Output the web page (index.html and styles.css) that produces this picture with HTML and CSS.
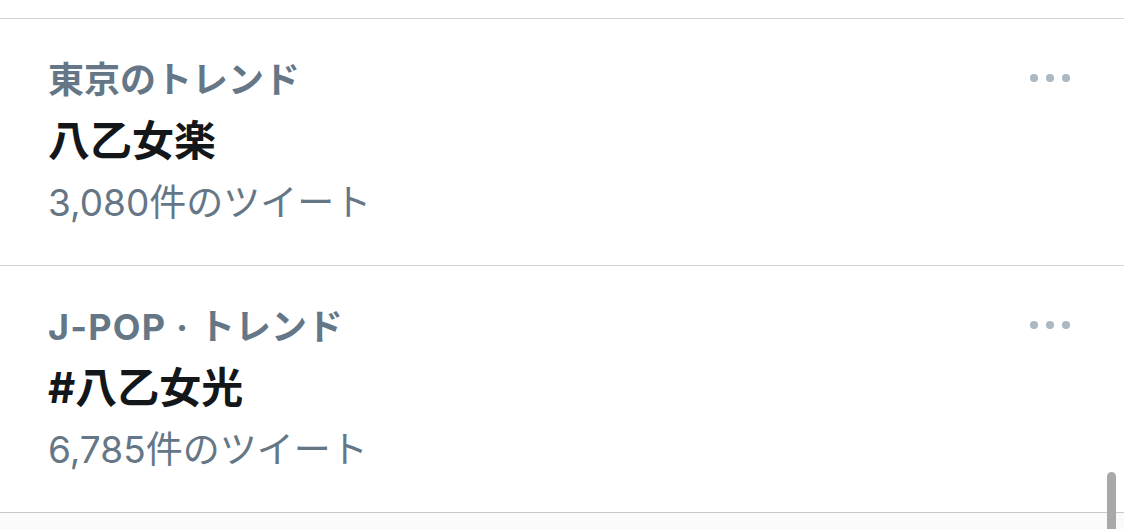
FILE: index.html
```html
<!DOCTYPE html>
<html lang="ja">
<head>
<meta charset="utf-8">
<link rel="stylesheet" href="styles.css">
</head>
<body>
<div class="list">
  <div class="trend">
    <div class="info">
      <div class="context">東京のトレンド</div>
      <div class="name">八乙女楽</div>
      <div class="count">3,080件のツイート</div>
    </div>
    <div class="more"><span></span><span></span><span></span></div>
  </div>
  <div class="trend">
    <div class="info">
      <div class="context"><span class="latin">J-POP · </span>トレンド</div>
      <div class="name">#八乙女光</div>
      <div class="count">6,785件のツイート</div>
    </div>
    <div class="more"><span></span><span></span><span></span></div>
  </div>
  <div class="tail"></div>
</div>
<div class="scrollbar"></div>
</body>
</html>
```
FILE: styles.css
```css
html, body {
  margin: 0;
  padding: 0;
  background: #ffffff;
  overflow: hidden;
}
body {
  width: 1124px;
  height: 529px;
  position: relative;
  font-family: Inter, "Noto Sans CJK JP", sans-serif;
}
.list {
  padding-top: 18px;
}
.trend {
  border-top: 1px solid #d4d4d8;
  height: 246px;
  display: flex;
  justify-content: space-between;
  align-items: flex-start;
  padding-left: 48px;
}
.info {
  padding-top: 30px;
}
.context {
  font-size: 36px;
  line-height: 62px;
  font-weight: 700;
  color: #657786;
}
.latin {
  letter-spacing: 1.2px;
}
.name {
  font-size: 42px;
  line-height: 62px;
  font-weight: 700;
  color: #14171a;
  margin-top: -1px;
}
.count {
  font-size: 37px;
  line-height: 62px;
  font-weight: 400;
  color: #657786;
}
.more {
  display: flex;
  gap: 8px;
  margin-top: 55px;
  margin-right: 54px;
}
.more span {
  width: 8px;
  height: 8px;
  border-radius: 50%;
  background: #aab8c2;
}
.tail {
  border-top: 1px solid #c8c8cc;
  height: 40px;
  background: #fafafa;
}
.scrollbar {
  position: absolute;
  left: 1107px;
  top: 472px;
  width: 9px;
  height: 80px;
  border-radius: 5px;
  background: #a8a8a8;
}
```
